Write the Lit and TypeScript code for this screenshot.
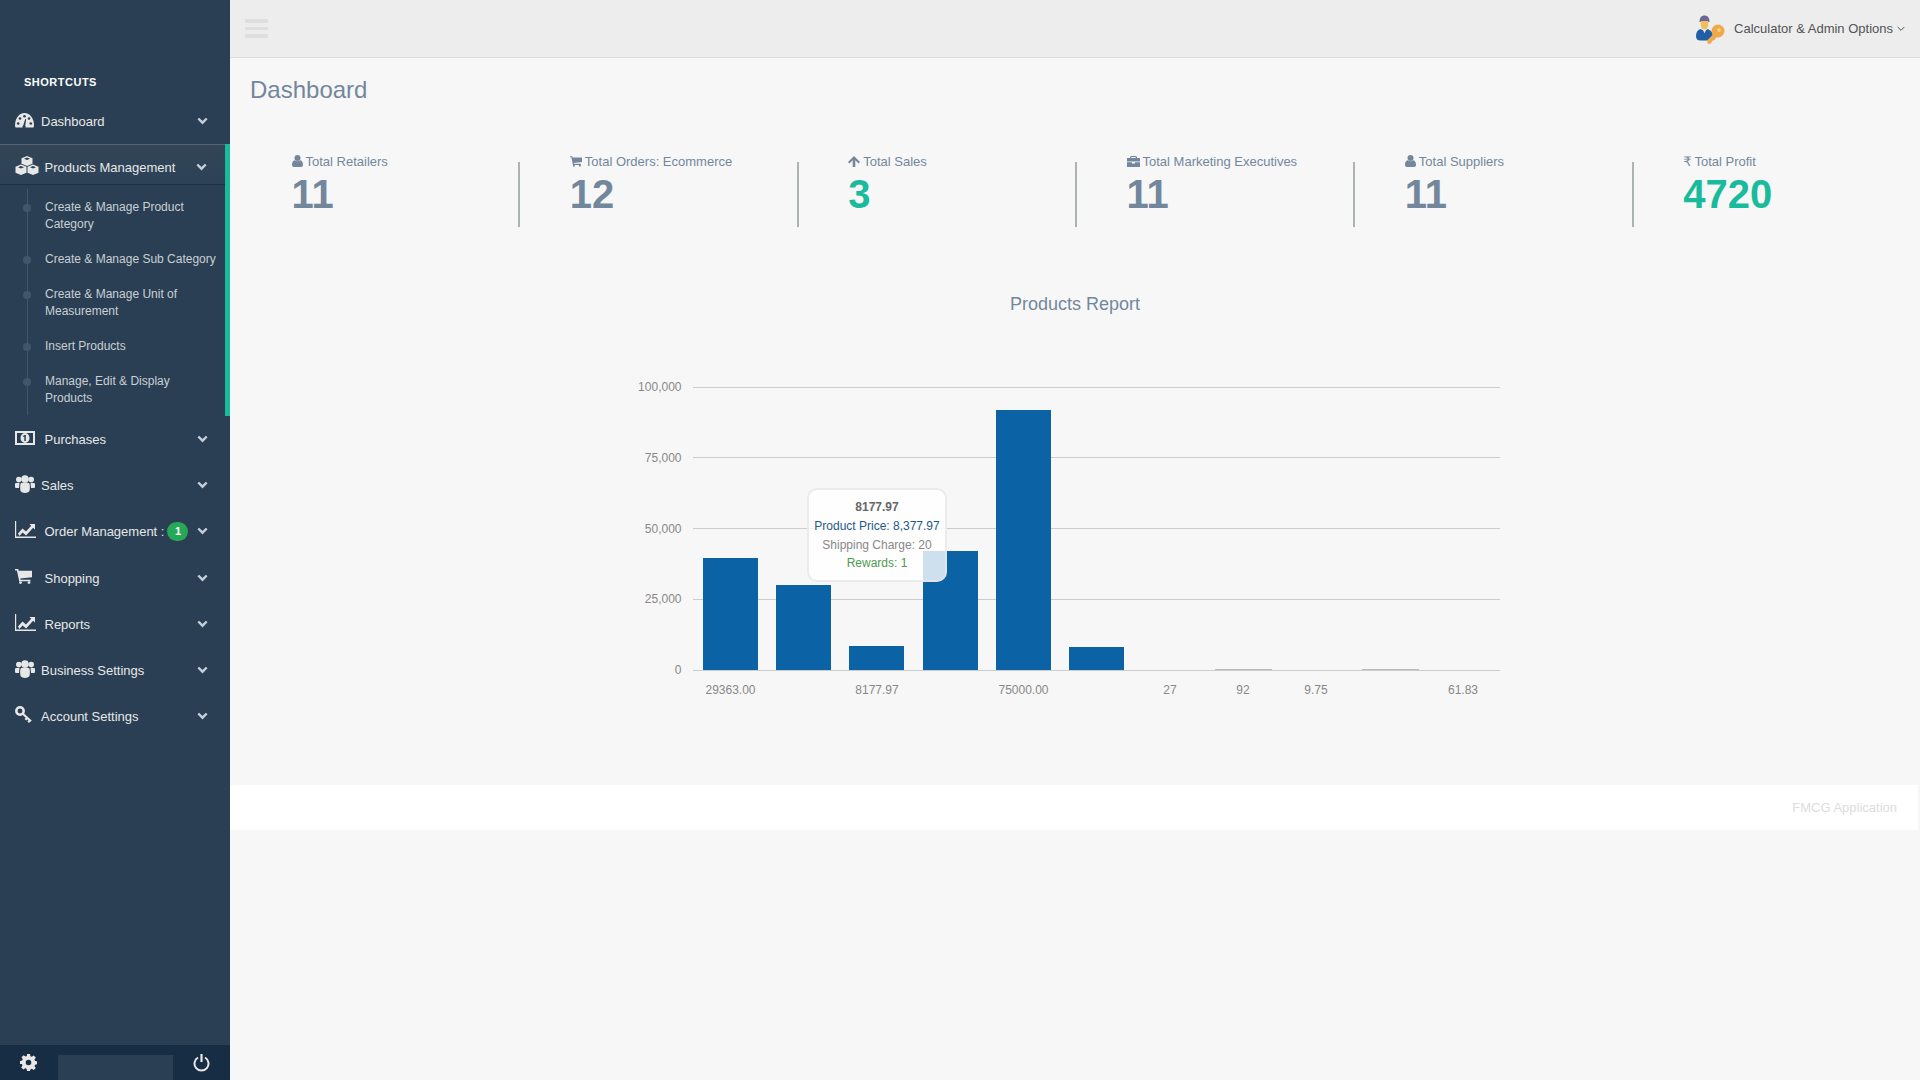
// app.ts - FMCG admin dashboard
import { LitElement, html, css, svg } from 'lit';
import { customElement } from 'lit/decorators.js';

const DARK = '#2A3F54';

const icons: Record<string, any> = {
  dashboard: svg`<svg width="19" height="16" viewBox="0 0 19 16"><path d="M0 13.5C0 6.5 4 1 9.5 1S19 6.5 19 13.5c0 .7-.2 1.5-.6 2H.6C.2 15 0 14.2 0 13.5z" fill="currentColor"/><g fill="${DARK}"><circle cx="3.2" cy="11.5" r="1.3"/><circle cx="5" cy="6.5" r="1.3"/><circle cx="9.5" cy="4.2" r="1.3"/><circle cx="15.8" cy="11.5" r="1.3"/><circle cx="14" cy="6.5" r="1.3"/><path d="M8.2 13.5l2-6.5 1 .3-1 6.4a1.6 1.6 0 1 1-2-.2z"/></g></svg>`,
  cubes: svg`<svg width="24" height="19" viewBox="0 0 24 19"><g fill="currentColor"><path d="M12 0l5.5 2.2v5.6L12 10 6.500 7.800V2.200z"/><path d="M6 8.500l5.500 2.200v6L6 19 .5 16.700v-6z"/><path d="M18 8.500l5.500 2.200v6L18 19l-5.500-2.300v-6z"/></g><g fill="${DARK}"><path d="M12 1.500L9 2.700 12 3.900 15 2.700z"/><path d="M6 10l-3 1.200 3 1.200 3-1.200z"/><path d="M18 10l-3 1.200 3 1.200 3-1.200z"/></g></svg>`,
  money: svg`<svg width="20" height="14" viewBox="0 0 20 14"><path fill="currentColor" fill-rule="evenodd" d="M0 0h20v14H0zM2 2v10h16V2z"/><ellipse cx="10" cy="7" rx="4.500" ry="5" fill="currentColor"/><path fill="${DARK}" d="M9.300 4h1.500v6H9.300V5.600l-1 .5-.4-.8z"/></svg>`,
  users: svg`<svg width="20" height="18" viewBox="0 0 20 18"><g fill="currentColor"><circle cx="3.800" cy="4.500" r="2.800"/><circle cx="16.200" cy="4.500" r="2.800"/><circle cx="10" cy="4" r="3.800"/><path d="M0 8.500c1-.8 2.500-1 4.500-.8L4 13H1.500C.5 13 0 12.500 0 11.500z"/><path d="M20 8.500c-1-.8-2.500-1-4.500-.8l.5 5.300h2.500c1 0 1.500-.5 1.500-1.500z"/><path d="M5.500 8.500c1-.7 2.500-1 4.500-1s3.500.3 4.500 1c.5 2 .5 5 0 7.500-1 1.300-2.500 2-4.500 2s-3.500-.7-4.500-2c-.5-2.500-.5-5.500 0-7.500z"/></g></svg>`,
  chart: svg`<svg width="21" height="17" viewBox="0 0 21 17"><path fill="currentColor" d="M0 0h1.200v15.500H21V17H0z"/><path fill="currentColor" d="M3 12.500l4.500-5 3.500 3 5.200-5.800-1.800-1.700H20v5.600l-1.900-1.900-7 7.700-3.500-3-3.200 3.500z"/></svg>`,
  cart: svg`<svg width="17" height="15" viewBox="0 0 17 15"><g fill="currentColor"><path d="M0 0h3.200l.5 1.800H17v6.400L5.200 9.600l.3 1.200H15.500V12.300H4.200L1.900 1.500H0z"/><circle cx="5.500" cy="13.600" r="1.400"/><circle cx="14" cy="13.600" r="1.400"/></g></svg>`,
  key: svg`<svg width="18" height="17" viewBox="0 0 18 17"><g fill="none" stroke="currentColor"><circle cx="5" cy="5" r="3.700" stroke-width="2.500"/><path d="M7.800 7.800l8.200 7.400M12.200 11.700l-1.800 2M15 14.200l-1.800 2" stroke-width="2.200"/></g></svg>`,
  chevron: svg`<svg width="11" height="8" viewBox="0 0 11 8"><path d="M1.300 1.500l4.200 4.200 4.200-4.200" fill="none" stroke="currentColor" stroke-width="2.400"/></svg>`,
  gear: svg`<svg width="17" height="17" viewBox="0 0 17 17"><path fill="currentColor" fill-rule="evenodd" d="M7 0h3l.4 2.200 1.400.6 1.900-1.300 2.100 2.100-1.300 1.900.6 1.400 2.200.4v3l-2.200.4-.6 1.400 1.300 1.900-2.100 2.100-1.900-1.300-1.400.6L10 17H7l-.4-2.200-1.400-.6-1.900 1.300-2.100-2.100 1.300-1.900-.6-1.400L0 10V7l2.200-.4.6-1.400-1.300-1.900 2.100-2.100 1.900 1.300 1.400-.6zM8.500 5.700a2.800 2.800 0 1 0 0 5.600 2.800 2.800 0 0 0 0-5.600z"/></svg>`,
  power: svg`<svg width="17" height="18" viewBox="0 0 17 18"><path d="M5 3.500a7 7 0 1 0 7 0" fill="none" stroke="currentColor" stroke-width="2"/><path d="M8.500 0v8" stroke="currentColor" stroke-width="2.200"/></svg>`,
  user: svg`<svg width="11" height="12" viewBox="0 0 11 12"><g fill="currentColor"><circle cx="5.500" cy="3" r="3"/><path d="M0 10c0-3 1-4.500 2.700-4.800 1.800 1.300 3.800 1.300 5.600 0C10 5.500 11 7 11 10c0 1.300-.8 2-2 2H2c-1.200 0-2-.7-2-2z"/></g></svg>`,
  cartSmall: svg`<svg width="12" height="11" viewBox="0 0 17 15"><g fill="currentColor"><path d="M0 0h3.200l.5 1.800H17v6.400L5.200 9.600l.3 1.200H15.500V12.300H4.200L1.900 1.500H0z"/><circle cx="5.500" cy="13.600" r="1.400"/><circle cx="14" cy="13.600" r="1.400"/></g></svg>`,
  up: svg`<svg width="12" height="11" viewBox="0 0 12 11"><path fill="currentColor" d="M6 0l6 6-1.400 1.400-3.300-3.200V11H4.700V4.200L1.400 7.400 0 6z"/></svg>`,
  briefcase: svg`<svg width="13" height="11" viewBox="0 0 13 11"><path fill="currentColor" fill-rule="evenodd" d="M4 0h5l1 1v1h3v3.500H0V2h3V1zM4.300 1v1h4.400V1zM0 6.300h5V7.500h3V6.300h5V11H0z"/></svg>`,
};

const avatar = svg`<svg width="29" height="30" viewBox="0 0 29 30">
  <path d="M3.500 8c0-4.500 2-6.500 5-6.500s5 2 5 6.500z" fill="#6E6496"/>
  <path d="M4.800 7h7.400v3.500c0 3-1.700 5-3.700 5s-3.700-2-3.700-5z" fill="#F2BE57"/>
  <path d="M0 22c0-3.500 1.500-6 4.500-7l4 2 3.500-2 3.500 2.500c1 1 1.500 3 1 5.500-1 2-3 3.500-6 3.500H4.500C1.500 26.500 0 25 0 22z" fill="#1F5FA8"/>
  <path d="M6.800 15.500h3.400l-1.700 4z" fill="#F6E6C8"/>
  <circle cx="22" cy="17" r="6.500" fill="#EFA94A"/><circle cx="23" cy="16" r="1.800" fill="#FBD591"/>
  <path d="M17.500 20l-6.500 6.500 1 3.500 3-.5 1-2.500 2.500-1 3-4z" fill="#EFA94A"/>
</svg>`;

const menu = [
  { label: 'Dashboard', icon: 'dashboard' },
  { label: 'Products Management', icon: 'cubes', wide: true, active: true },
  { label: 'Purchases', icon: 'money', wide: true },
  { label: 'Sales', icon: 'users' },
  { label: 'Order Management :', icon: 'chart', wide: true, badge: '1' },
  { label: 'Shopping', icon: 'cart', wide: true },
  { label: 'Reports', icon: 'chart', wide: true },
  { label: 'Business Settings', icon: 'users' },
  { label: 'Account Settings', icon: 'key' },
];

const children = [
  'Create & Manage Product Category',
  'Create & Manage Sub Category',
  'Create & Manage Unit of Measurement',
  'Insert Products',
  'Manage, Edit & Display Products',
];

const tiles = [
  { label: 'Total Retailers', icon: 'user', value: '11' },
  { label: 'Total Orders: Ecommerce', icon: 'cartSmall', value: '12' },
  { label: 'Total Sales', icon: 'up', value: '3', green: true },
  { label: 'Total Marketing Executives', icon: 'briefcase', value: '11' },
  { label: 'Total Suppliers', icon: 'user', value: '11' },
  { label: 'Total Profit', glyph: '₹', value: '4720', green: true },
];

// chart coordinates are relative to the svg, which starts at 625,370 on the page
const bars = [
  [78, 188],
  [151, 215],
  [224, 276],
  [298, 181],
  [371, 40],
  [444, 277],
];
const gridY = [17, 87, 158, 229, 300];
const yLabels: [number, string][] = [
  [21, '100,000'],
  [92, '75,000'],
  [163, '50,000'],
  [233, '25,000'],
  [304, '0'],
];
const xLabels: [number, string][] = [
  [105.500, '29363.00'],
  [252, '8177.97'],
  [398.500, '75000.00'],
  [545, '27'],
  [618, '92'],
  [691, '9.75'],
  [838, '61.83'],
];

@customElement('app-root')
export class AppRoot extends LitElement {
  static styles = css`
    :host {
      display: block;
      font-family: 'Liberation Sans', Arial, sans-serif;
      font-size: 13px;
      color: #73879c;
    }
    .app {
      display: flex;
      height: 100vh;
      background: #f7f7f7;
    }

    .sidebar {
      display: flex;
      flex-direction: column;
      flex: 0 0 230px;
      background: #2a3f54;
      color: #e7e7e7;
    }
    .shortcuts {
      margin: 76px 0 10px 24px;
      font-size: 11px;
      line-height: 12px;
      font-weight: bold;
      letter-spacing: 0.5px;
      color: #fff;
    }
    .menu {
      list-style: none;
      margin: 0;
      padding: 0;
    }
    .item.active {
      border-right: 5px solid #1abb9c;
    }
    .row {
      display: flex;
      align-items: center;
      height: 40px;
      box-sizing: border-box;
      margin-bottom: 6px;
      padding: 6px 22px 0 15px;
    }
    .active > .row {
      margin-bottom: 5px;
      padding-right: 18px;
      background: linear-gradient(#334556, #2c4257);
      box-shadow: rgba(0, 0, 0, 0.25) 0 1px 0, inset rgba(255, 255, 255, 0.16) 0 1px 0;
    }
    .row.tall {
      margin-bottom: 7px;
    }
    .ico {
      display: flex;
      flex: 0 0 26px;
      align-items: center;
      margin-top: -3px;
    }
    .wide .ico {
      flex-basis: 29.500px;
    }
    .label {
      line-height: 17px;
      white-space: nowrap;
    }
    .badge {
      margin-left: 3px;
      width: 21px;
      height: 19px;
      border-radius: 10px;
      background: #27a857;
      color: #fff;
      font-size: 11px;
      font-weight: bold;
      line-height: 19px;
      text-align: center;
    }
    .chev {
      display: flex;
      margin-left: auto;
      color: #c4cfda;
    }
    .children {
      position: relative;
      list-style: none;
      margin: 0;
      padding: 0 0 1px;
    }
    .children::after {
      content: '';
      position: absolute;
      left: 27px;
      top: 0;
      bottom: 1px;
      border-left: 1px solid #425668;
    }
    .child {
      position: relative;
      padding: 10px 5px 8px 45px;
      font-size: 12px;
      line-height: 17px;
      color: rgba(255, 255, 255, 0.75);
    }
    .child::before {
      content: '';
      position: absolute;
      left: 23px;
      top: 15px;
      width: 8px;
      height: 8px;
      border-radius: 50%;
      background: #425668;
    }
    .side-foot {
      display: flex;
      margin-top: auto;
      height: 35px;
      background: #172d44;
      color: #e7e7e7;
    }
    .foot-btn {
      display: flex;
      flex: 0 0 57.500px;
      align-items: center;
      justify-content: center;
    }
    .foot-mid {
      flex: 1;
      align-self: flex-end;
      height: 25px;
      background: #2a3f54;
    }

    .main {
      display: flex;
      flex-direction: column;
      flex: 1;
      min-width: 0;
    }
    .topbar {
      display: flex;
      align-items: center;
      flex: 0 0 57px;
      padding: 0 15px 0 15px;
      background: #ededed;
      border-bottom: 1px solid #d9dee4;
    }
    .burger {
      display: flex;
      flex-direction: column;
      gap: 4px;
      width: 23px;
    }
    .burger span {
      height: 3.500px;
      border-radius: 1px;
      background: #dedede;
    }
    .profile {
      display: flex;
      align-items: center;
      margin-left: auto;
      color: #515356;
      font-size: 13px;
    }
    .profile svg:first-child {
      margin-right: 9px;
    }
    .caret {
      margin-left: 4px;
      margin-top: 1px;
    }
    .page-title {
      margin: 19px 0 0 20px;
      font-size: 24px;
      line-height: 26px;
      font-weight: normal;
    }
    .tiles {
      display: grid;
      grid-template-columns: repeat(6, 1fr);
      margin: 49px 10px 0;
    }
    .tile {
      position: relative;
      padding-left: 51.500px;
    }
    .tile + .tile::before {
      content: '';
      position: absolute;
      left: 0;
      top: 10px;
      height: 65px;
      border-left: 2px solid #adb2b5;
    }
    .tile-top {
      display: flex;
      align-items: center;
      gap: 3px;
      height: 18px;
      white-space: nowrap;
    }
    .rupee {
      font-family: 'DejaVu Sans', sans-serif;
      font-size: 13px;
    }
    .count {
      margin-top: 1px;
      font-size: 40px;
      line-height: 47px;
      font-weight: bold;
    }
    .green {
      color: #1abb9c;
    }
    .chart-title {
      margin: 76px 10px 0;
      font-size: 18px;
      line-height: 20px;
      font-weight: normal;
      text-align: center;
    }
    .chart {
      position: relative;
      width: 900px;
      height: 340px;
      margin: 56px auto 0;
    }
    .chart svg {
      display: block;
    }
    .chart text {
      font-family: 'Liberation Sans', Arial, sans-serif;
      font-size: 12px;
      fill: #888;
    }
    .tip {
      position: absolute;
      left: 182px;
      top: 118px;
      width: 140px;
      height: 94px;
      box-sizing: border-box;
      padding-top: 8px;
      border: 2px solid rgba(230, 230, 230, 0.8);
      border-radius: 10px;
      background: rgba(255, 255, 255, 0.8);
      font-size: 12px;
      line-height: 18.300px;
      text-align: center;
      white-space: nowrap;
    }
    .tip-title {
      margin-bottom: 1px;
      font-weight: bold;
      color: #666;
    }
    .tip-price {
      color: #1f5a87;
    }
    .tip-ship {
      color: #888;
    }
    .tip-rewards {
      color: #4f9a4f;
    }
    .footer {
      margin: 75px 2px 0 0;
      padding: 0 21px 0 0;
      height: 45px;
      line-height: 45px;
      background: #fff;
      color: #ddd;
      text-align: right;
    }
  `;

  renderItem(m: any) {
    return html`
      <li class="item ${m.active ? 'active' : ''} ${m.wide ? 'wide' : ''}">
        <div class="row ${m.badge ? 'tall' : ''}">
          <span class="ico">${icons[m.icon]}</span>
          <span class="label">${m.label}</span>
          ${m.badge ? html`<span class="badge">${m.badge}</span>` : ''}
          <span class="chev">${icons.chevron}</span>
        </div>
        ${m.active
          ? html`<ul class="children">${children.map((c) => html`<li class="child">${c}</li>`)}</ul>`
          : ''}
      </li>
    `;
  }

  renderChart() {
    return html`
      <div class="chart">
        <svg width="900" height="340" viewBox="0 0 900 340">
          ${gridY.map((y) => svg`<rect x="68" y=${y} width="807" height="1" fill="#ccc"></rect>`)}
          ${yLabels.map(([y, t]) => svg`<text x="56.500" y=${y} text-anchor="end">${t}</text>`)}
          ${bars.map(([x, y]) => svg`<rect x=${x} y=${y} width="55" height=${300 - y} fill="#0b62a4"></rect>`)}
          <rect x="590" y="299" width="57" height="1" fill="#bbb"></rect>
          <rect x="737" y="299" width="57" height="1" fill="#bbb"></rect>
          ${xLabels.map(([x, t]) => svg`<text x=${x} y="324" text-anchor="middle">${t}</text>`)}
        </svg>
        <div class="tip">
          <div class="tip-title">8177.97</div>
          <div class="tip-price">Product Price: 8,377.97</div>
          <div class="tip-ship">Shipping Charge: 20</div>
          <div class="tip-rewards">Rewards: 1</div>
        </div>
      </div>
    `;
  }

  render() {
    return html`
      <div class="app">
        <aside class="sidebar">
          <div class="shortcuts">SHORTCUTS</div>
          <ul class="menu">${menu.map((m) => this.renderItem(m))}</ul>
          <div class="side-foot">
            <span class="foot-btn">${icons.gear}</span>
            <span class="foot-mid"></span>
            <span class="foot-btn">${icons.power}</span>
          </div>
        </aside>
        <main class="main">
          <header class="topbar">
            <div class="burger"><span></span><span></span><span></span></div>
            <div class="profile">
              ${avatar}
              <span>Calculator &amp; Admin Options</span>
              <svg class="caret" width="8" height="6" viewBox="0 0 8 6"><path d="M.7 1l3.300 3.300L7.300 1" fill="none" stroke="currentColor"/></svg>
            </div>
          </header>
          <h3 class="page-title">Dashboard</h3>
          <section class="tiles">
            ${tiles.map(
              (t) => html`
                <div class="tile">
                  <div class="tile-top">
                    ${t.glyph ? html`<span class="rupee">${t.glyph}</span>` : icons[t.icon!]}
                    <span>${t.label}</span>
                  </div>
                  <div class="count ${t.green ? 'green' : ''}">${t.value}</div>
                </div>
              `,
            )}
          </section>
          <h3 class="chart-title">Products Report</h3>
          ${this.renderChart()}
          <footer class="footer">FMCG Application</footer>
        </main>
      </div>
    `;
  }
}
